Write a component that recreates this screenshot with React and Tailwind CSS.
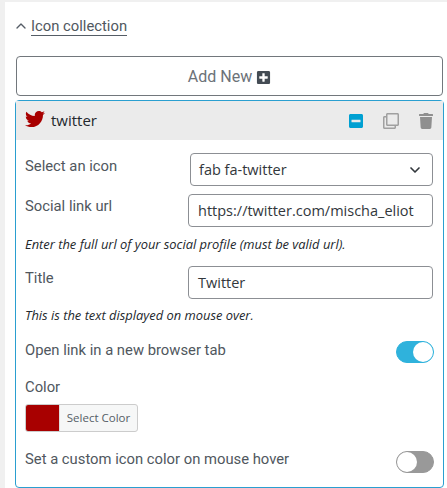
import { ChevronDown, ChevronUp } from 'lucide-react';
import { FaMinusSquare, FaPlusSquare, FaRegClone, FaTrash, FaTwitter } from 'react-icons/fa';

const Toggle = ({ on }) => (
  <span
    className={`mr-[-1px] flex h-[22px] w-[38px] shrink-0 rounded-full border ${
      on ? 'justify-end border-[#2fb2dc] bg-[#2fb2dc]' : 'justify-start border-[#999999] bg-[#999999]'
    }`}
  >
    <span className="h-5 w-5 rounded-full bg-white" />
  </span>
);

const Row = ({ label, labelClass = 'mt-[2px]', children }) => (
  <div className="flex items-start justify-between">
    <span className={`${labelClass} text-[14.8px] leading-5 text-[#50575e]`}>{label}</span>
    {children}
  </div>
);

const TextField = ({ value }) => (
  <div className="flex h-[33px] w-[245px] items-center rounded border border-[#8c8f94] bg-white px-[9px] font-['Open_Sans'] text-[14.5px] text-[#32373c]">
    {value}
  </div>
);

const Hint = ({ children }) => (
  <p className="font-['Open_Sans'] text-[12.9px] leading-4 text-[#23282d] italic">{children}</p>
);

export default function App() {
  return (
    <div className="h-[488px] overflow-hidden bg-[#f0f0f0] pt-[2px] pl-[5px] font-['Roboto']">
      <div className="h-full bg-white px-[10px]">
        <div className="flex h-[54px] items-start pt-[15px]">
          <ChevronUp className="mt-[1px] ml-[-2px] h-[16px] w-[16px] text-[#555d66]" strokeWidth={2} />
          <span className="ml-[2px] border-b border-[#555d66] text-[14.8px] leading-[18px] text-[#50575e]">
            Icon collection
          </span>
        </div>

        <button
          className="ml-[1px] flex h-10 w-[427px] items-center justify-center gap-[4px] rounded border border-[#72777c] bg-white pt-[2px] text-[16px] text-[#6c7278]"
          type="button"
        >
          Add New
          <FaPlusSquare className="h-[15px] w-[15px] text-[#444c54]" />
        </button>

        <div className="mt-1 h-[388px] w-[429px] rounded border border-[#2a9fd0]">
          <div className="flex h-[39px] items-center justify-between bg-[#ebebeb] pr-[9px] pl-[9px]">
            <div className="flex items-center gap-[6px]">
              <FaTwitter className="-mt-[3px] h-[20px] w-[20px] text-[#a80000]" />
              <span className="font-['Open_Sans'] text-[15px] text-[#23282d]">twitter</span>
            </div>
            <div className="flex items-center gap-[19px]">
              <FaMinusSquare className="h-4 w-4 text-[#00a0d2]" />
              <FaRegClone className="h-4 w-4 text-[#a0a0a0]" />
              <FaTrash className="h-4 w-4 text-[#8f8f8f]" />
            </div>
          </div>

          <div className="pt-[13px] pr-[10px] pl-[9px]">
            <Row label="Select an icon" labelClass="mt-[3px]">
              <div className="flex h-[33px] w-[243px] items-center justify-between rounded border border-[#8c8f94] bg-white pr-[9px] pl-[8px] font-['Open_Sans'] text-[14.5px] text-[#32373c]">
                fab fa-twitter
                <ChevronDown className="h-[16px] w-[16px] text-[#32373c]" strokeWidth={2.5} />
              </div>
            </Row>
            <div className="mt-2">
              <Row label="Social link url">
                <TextField value="https://twitter.com/mischa_eliot" />
              </Row>
            </div>
            <div className="mt-[9px]">
              <Hint>Enter the full url of your social profile (must be valid url).</Hint>
            </div>
            <div className="mt-[14px]">
              <Row label="Title">
                <TextField value="Twitter" />
              </Row>
            </div>
            <div className="mt-2">
              <Hint>This is the text displayed on mouse over.</Hint>
            </div>

            <div className="mt-[18px] flex items-start justify-between">
              <span className="-mt-[1px] text-[14.8px] leading-5 text-[#50575e]">Open link in a new browser tab</span>
              <Toggle on />
            </div>

            <p className="mt-[14px] text-[14.8px] leading-5 text-[#50575e]">Color</p>
            <div className="mt-[7px] flex h-7 w-[113px] overflow-hidden rounded-[3px] border border-[#cccccc] bg-[#f6f7f7]">
              <span className="w-[33px] bg-[#a80000]" />
              <span className="flex-1 border-l border-[#dddddd] text-center font-['Open_Sans'] text-[11.5px] leading-[26px] text-[#555d66]">
                Select Color
              </span>
            </div>

            <div className="mt-[19px] flex items-start justify-between">
              <span className="-mt-[2px] text-[14.8px] leading-5 text-[#50575e]">Set a custom icon color on mouse hover</span>
              <Toggle />
            </div>
          </div>
        </div>
      </div>
    </div>
  );
}
